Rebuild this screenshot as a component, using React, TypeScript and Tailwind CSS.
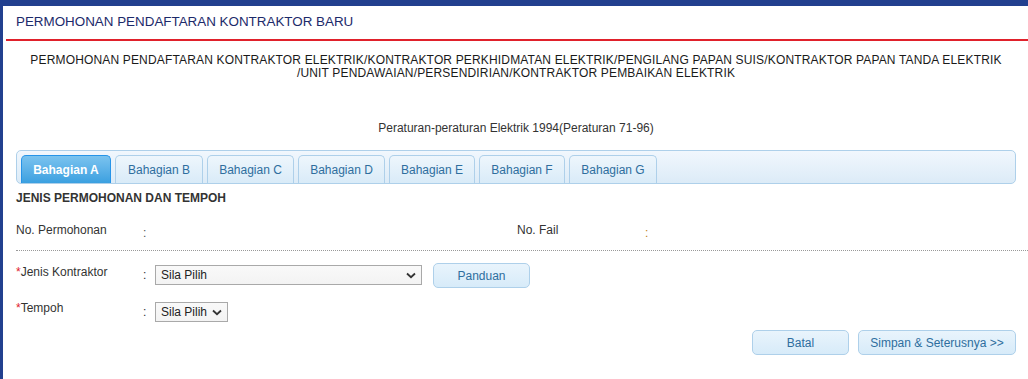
import React from "react";

const tabs = ["Bahagian A", "Bahagian B", "Bahagian C", "Bahagian D", "Bahagian E", "Bahagian F", "Bahagian G"];
const tabWidths = [90, 88, 87, 87, 86, 86, 88];

function Chevron() {
  return (
    <svg width="10" height="7" viewBox="0 0 10 7" className="shrink-0">
      <path d="M1 1.5 L5 5.2 L9 1.5" fill="none" stroke="#333" strokeWidth="1.8" />
    </svg>
  );
}

function FakeSelect({ width }: { width: string }) {
  return (
    <div
      className={`${width} h-[20px] border border-[#a9a9a9] bg-gradient-to-b from-[#f9f9f9] to-[#f3f3f3] flex items-center justify-between pl-[5px] pr-[5px] text-[12px] text-[#222]`}
    >
      <span>Sila Pilih</span>
      <Chevron />
    </div>
  );
}

function Btn({ children, width }: { children: React.ReactNode; width: string }) {
  return (
    <button
      className={`${width} h-[25px] rounded-[5px] border border-[#aed0ea] bg-gradient-to-b from-[#e9f4fc] to-[#d7ebf9] text-[12px] text-[#2e6e9e]`}
    >
      {children}
    </button>
  );
}

export default function App() {
  return (
    <div
      className="w-[1028px] h-[379px] overflow-hidden bg-white border-t-[6px] border-l-[3px] border-[#22408f] text-[12px] text-[#333]"
      style={{ fontFamily: '"Liberation Sans", Arial, sans-serif' }}
    >
      {/* Header */}
      <div className="ml-[3px] h-[35px] border-b-2 border-[#e0212b] flex items-center pl-[10px] pb-[1px]">
        <span className="text-[13.4px] text-[#1c2a6a]">PERMOHONAN PENDAFTARAN KONTRAKTOR BARU</span>
      </div>

      <div className="pl-[13px] pr-[12px]">
        <div className="mt-[13px] text-center text-[12px] leading-[13px] text-[#1a1a1a] tracking-[0.16px]">
          PERMOHONAN PENDAFTARAN KONTRAKTOR ELEKTRIK/KONTRAKTOR PERKHIDMATAN ELEKTRIK/PENGILANG PAPAN SUIS/KONTRAKTOR PAPAN TANDA ELEKTRIK
          <br />
          /UNIT PENDAWAIAN/PERSENDIRIAN/KONTRAKTOR PEMBAIKAN ELEKTRIK
        </div>

        <div className="mt-[41px] text-center text-[12px] leading-[14px] text-[#333]">
          Peraturan-peraturan Elektrik 1994(Peraturan 71-96)
        </div>

        {/* Tabs */}
        <div className="mt-[15px] h-[34px] rounded-[5px] border border-[#aed0ea] bg-gradient-to-b from-[#f1f7fd] to-[#dcebf7] flex items-end pl-[4px] gap-[4px]">
          {tabs.map((t, i) => (
            <div
              key={t}
              className={
                i === 0
                  ? "shrink-0 h-[28px] rounded-t-[5px] border border-b-0 border-[#2694e8] bg-gradient-to-b from-[#7ac3ef] to-[#3aa0e0] text-white font-bold flex items-center justify-center text-[12px]"
                  : "shrink-0 h-[28px] rounded-t-[5px] border border-b-0 border-[#aed0ea] bg-gradient-to-b from-[#eef6fc] to-[#d9ebf8] text-[#2e6e9e] flex items-center justify-center text-[12px]"
              }
              style={{ width: tabWidths[i] }}
            >
              {t}
            </div>
          ))}
        </div>

        <div className="mt-[7px] font-bold text-[12px] text-[#333] leading-[14px]">JENIS PERMOHONAN DAN TEMPOH</div>

        {/* No. Permohonan row */}
        <div className="mt-[18px] flex h-[22px]">
          <div className="w-[501px] flex">
            <div className="w-[127px] leading-[14px]">No. Permohonan</div>
            <div className="pt-[3px] leading-[14px] text-[#555]">:</div>
          </div>
          <div className="flex">
            <div className="w-[128px] leading-[14px]">No. Fail</div>
            <div className="pt-[3px] leading-[14px] text-[#c08020]">:</div>
          </div>
        </div>
      </div>

      <div className="ml-[13px] mt-[5px] border-t border-dotted border-[#999]" />

      <div className="pl-[13px] pr-[12px]">
        <div className="mt-[13px] flex items-start">
          <div className="w-[127px] leading-[14px] pt-[1px]">
            <span className="text-[#e0212b]">*</span>Jenis Kontraktor
          </div>
          <div className="w-[12px] pt-[4px] leading-[14px]">:</div>
          <div className="mt-[1px]">
            <FakeSelect width="w-[267px]" />
          </div>
          <div className="ml-[11px] -mt-[1px]">
            <Btn width="w-[97px]">Panduan</Btn>
          </div>
        </div>

        <div className="mt-[13px] flex items-start">
          <div className="w-[127px] leading-[14px]">
            <span className="text-[#e0212b]">*</span>Tempoh
          </div>
          <div className="w-[12px] pt-[4px] leading-[14px]">:</div>
          <div className="mt-[1px]">
            <FakeSelect width="w-[73px]" />
          </div>
        </div>

        <div className="mt-[8px] flex justify-end gap-[9px]">
          <Btn width="w-[97px]">Batal</Btn>
          <Btn width="w-[158px]">Simpan &amp; Seterusnya &gt;&gt;</Btn>
        </div>
      </div>
    </div>
  );
}
